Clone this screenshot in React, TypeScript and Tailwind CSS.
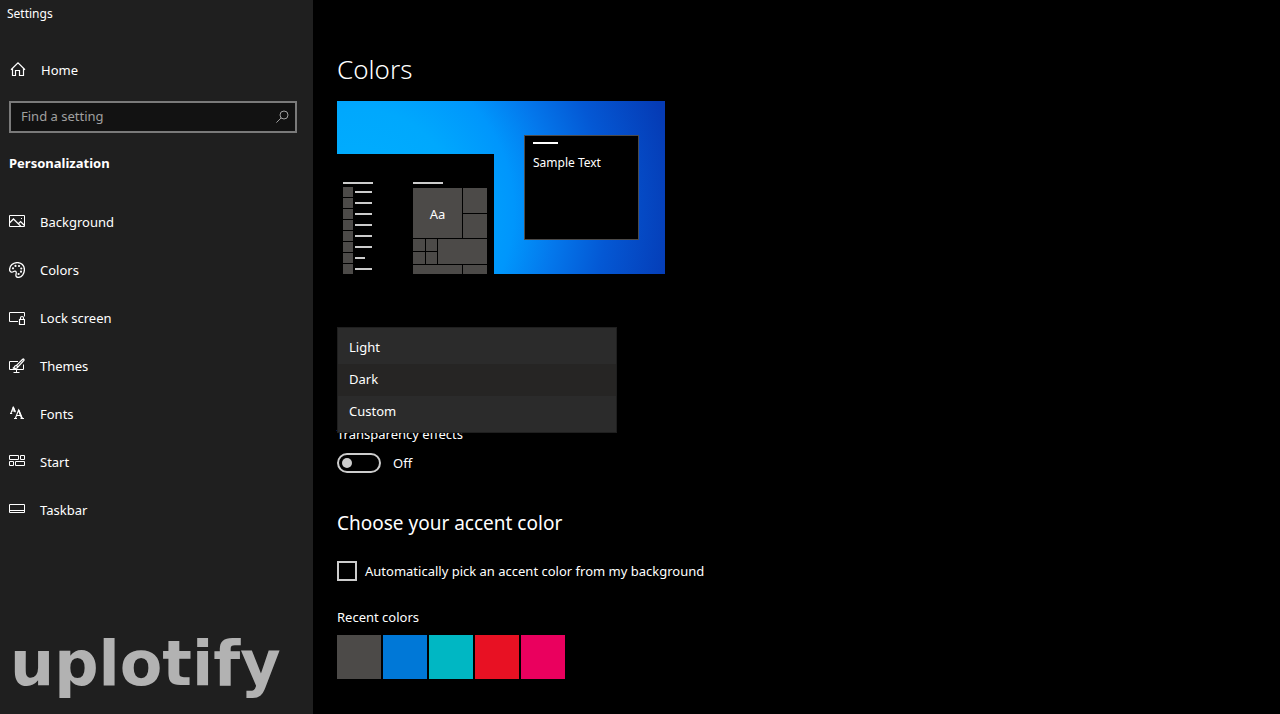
import { useState, type ReactNode } from "react";

function Icon({ children }: { children: ReactNode }) {
  return (
    <svg
      width="16"
      height="16"
      viewBox="0 0 16 16"
      fill="none"
      stroke="currentColor"
      strokeWidth="1"
      className="shrink-0"
      aria-hidden="true"
    >
      {children}
    </svg>
  );
}

const HomeIcon = () => (
  <Icon>
    <path d="M1 7.700 8 .9l7 6.800M2.500 6.500v7h3v-5h4v5h4v-7" strokeWidth="1.200" />
  </Icon>
);

const PictureIcon = () => (
  <Icon>
    <path d="M.5 1.500h15v11H.5z" />
    <path d="M.7 8.800 4.500 5l7.400 7.400M9.400 9.800l2.200-2.200 3.900 3.900" strokeWidth="1.300" />
    <path d="M12 4h1v1h-1z" fill="currentColor" stroke="none" />
  </Icon>
);

const PaletteIcon = () => (
  <Icon>
    <path
      d="M8.300.6c4.200 0 7.100 2.900 7.100 7 0 4.400-2.600 7.800-6.100 7.800-1.800 0-2.500-.9-2.400-2.300.1-1.200.6-1.800.3-2.900-.3-1.200-1.500-1.400-2.500-.7-.8.6-1.500.9-2.500.6C1 9.700.5 8.800.6 7.500.8 3.500 4 .6 8.300.6Z"
      strokeWidth="1.300"
    />
    <g fill="currentColor" stroke="none">
      <circle cx="4" cy="6.300" r="1.100" />
      <circle cx="6.500" cy="3.900" r="1.100" />
      <circle cx="10" cy="4" r="1.100" />
      <circle cx="12.300" cy="6.500" r="1.100" />
      <circle cx="12" cy="9.700" r="1.100" />
      <circle cx="9.600" cy="12" r="1.100" />
    </g>
  </Icon>
);

const LockScreenIcon = () => (
  <Icon>
    <path d="M9 11.500H.5v-9h15v4" />
    <path d="M10.500 9.500h5v5h-5zM11.500 9.500V8a1.500 1.500 0 0 1 3 0v1.500" strokeWidth="1.200" />
  </Icon>
);

const ThemesIcon = () => (
  <Icon>
    <path d="M9 3.500H.5v8h14V6.500M7.500 11.500v3M4.500 14.500h6" />
    <path
      d="M13.700 1.200 7.500 7.400l1.500 1.500L14.900 2.400C15.300 1.400 14.500.7 13.700 1.200ZM7.500 7.400c-1.300.1-2 .8-2.200 1.700-.1.500-.6.8-1.500.8 2.200.9 4.800.5 5.200-1"
      strokeWidth="1.300"
    />
  </Icon>
);

const FontsIcon = () => (
  <Icon>
    <path
      d="M1 7.500h2.200M1.900 7.300 4.200 1.200l2.200 5M2.700 5h3M5 12.500h3M11.500 12.500H15M6.400 12.300 9.600 4l3.500 8.300M7.500 9.500h4.400"
      strokeWidth="1.100"
    />
    <path d="m4.200 1.200 1.700 4.300M9.600 4l3.300 8.300" strokeWidth="1.700" />
  </Icon>
);

const StartIcon = () => (
  <Icon>
    <path d="M.5 1.500h9v4h-9zM11.500 1.500h4v4h-4zM.5 7.500h4v4h-4zM6.500 7.500h9v4h-9z" />
  </Icon>
);

const TaskbarIcon = () => (
  <Icon>
    <path d="M.5 2.500h15v8H.5zM.5 8.500h15" />
  </Icon>
);

const SearchIcon = () => (
  <Icon>
    <circle cx="10" cy="6" r="4" />
    <path d="M7.200 8.900 2.400 13.600" />
  </Icon>
);

const navItems = [
  { label: "Background", icon: <PictureIcon /> },
  { label: "Colors", icon: <PaletteIcon /> },
  { label: "Lock screen", icon: <LockScreenIcon /> },
  { label: "Themes", icon: <ThemesIcon /> },
  { label: "Fonts", icon: <FontsIcon /> },
  { label: "Start", icon: <StartIcon /> },
  { label: "Taskbar", icon: <TaskbarIcon /> },
];

const modes = ["Light", "Dark", "Custom"];

const recentColors = [
  { name: "Gray", className: "bg-[#4c4a48]" },
  { name: "Blue", className: "bg-[#0078d7]" },
  { name: "Teal", className: "bg-[#00b7c3]" },
  { name: "Red", className: "bg-[#e81123]" },
  { name: "Magenta", className: "bg-[#ea005e]" },
];

const appLines = [
  "w-[17px]",
  "w-[17px]",
  "w-[17px]",
  "w-[17px]",
  "w-[17px]",
  "w-[17px]",
  "w-[10px]",
  "w-[17px]",
];

function Sidebar() {
  return (
    <aside className="flex w-[313px] shrink-0 flex-col bg-[#1f1f1f]">
      <div className="px-[7px] pt-1 text-[12px] leading-5">Settings</div>
      <a href="#home" className="mt-[34px] flex h-6 items-center gap-[15px] px-[10px]">
        <HomeIcon />
        Home
      </a>
      <label className="mt-[19px] mr-4 ml-[9px] flex h-8 items-center border-2 border-[#7a7a7a] bg-[#121212] pr-[5px] pl-[10px] text-[#a0a0a0]">
        <input
          type="text"
          aria-label="Find a setting"
          placeholder="Find a setting"
          className="min-w-0 flex-1 bg-transparent pb-[2px] outline-none placeholder:text-[#a0a0a0]"
        />
        <SearchIcon />
      </label>
      <h2 className="mt-5 px-[9px] leading-5 font-bold">Personalization</h2>
      <nav className="mt-[25px] flex flex-col">
        {navItems.map((item) => (
          <a
            key={item.label}
            href={`#${item.label}`}
            className="flex h-12 items-center gap-[15px] px-[9px]"
          >
            {item.icon}
            {item.label}
          </a>
        ))}
      </nav>
      <div className="mt-auto px-[10px] pb-2 font-['DejaVu_Sans',sans-serif] text-[62px] leading-[84px] font-bold text-[#b2b2b2]">
        uplotify
      </div>
    </aside>
  );
}

function Preview() {
  return (
    <div className="flex h-[173px] w-[328px] items-start justify-between bg-[radial-gradient(ellipse_320px_320px_at_20px_110px,#00b0ff_0%,#00a8fd_32%,#0096fc_49%,#0478ec_62%,#0458d4_78%,#053bb5_100%)]">
      <div className="flex h-[120px] w-[157px] gap-10 self-end overflow-hidden bg-black pt-7 pl-[6px]">
        <div>
          <div className="h-[2px] w-[30px] bg-[#cccccc]" />
          <div className="mt-[3px] flex flex-col gap-px">
            {appLines.map((width, i) => (
              <div key={i} className="flex items-center gap-[2px]">
                <div className="size-[10px] bg-[#4c4a48]" />
                <div className={`h-[2px] bg-[#cccccc] ${width}`} />
              </div>
            ))}
          </div>
        </div>
        <div>
          <div className="h-[2px] w-[30px] bg-[#cccccc]" />
          <div className="mt-1 grid grid-cols-[49px_24px] grid-rows-[50px_25px_9px] gap-px">
            <div className="flex items-center justify-center bg-[#4c4a48] pt-[2px] text-[13px]">Aa</div>
            <div className="grid grid-rows-2 gap-px">
              <div className="bg-[#4c4a48]" />
              <div className="bg-[#4c4a48]" />
            </div>
            <div className="col-span-2 grid grid-cols-[12px_11px_49px] gap-px">
              <div className="grid grid-rows-2 gap-px">
                <div className="bg-[#4c4a48]" />
                <div className="bg-[#4c4a48]" />
              </div>
              <div className="grid grid-rows-2 gap-px">
                <div className="bg-[#4c4a48]" />
                <div className="bg-[#4c4a48]" />
              </div>
              <div className="bg-[#4c4a48]" />
            </div>
            <div className="bg-[#4c4a48]" />
            <div className="bg-[#4c4a48]" />
          </div>
        </div>
      </div>
      <div className="mt-[34px] mr-[26px] h-[105px] w-[115px] border border-[#4c4a48] bg-black px-2 pt-[6px]">
        <div className="h-[2px] w-[25px] bg-white" />
        <div className="mt-[9px] text-[12px] leading-5 whitespace-nowrap">Sample Text</div>
      </div>
    </div>
  );
}

export default function App() {
  const [mode, setMode] = useState("Dark");
  const [transparency, setTransparency] = useState(false);

  return (
    <div className="flex min-h-screen bg-black font-['Noto_Sans',sans-serif] text-[13px] leading-5 text-white">
      <Sidebar />
      <main className="flex min-w-0 flex-1 flex-col items-start px-6 pt-[49px]">
        <h1 className="text-[26px] leading-10 font-light">Colors</h1>
        <div className="mt-3">
          <Preview />
        </div>

        <div className="relative mt-[53px] h-[97px] w-[280px]">
          <div
            role="listbox"
            aria-label="Choose your color"
            className="absolute inset-x-0 top-0 flex flex-col border border-[#1f1f1f] bg-[#2b2b2b] py-1"
          >
            {modes.map((name) => (
              <button
                key={name}
                type="button"
                role="option"
                aria-selected={mode === name}
                onClick={() => setMode(name)}
                className={`h-8 px-[11px] pb-[2px] text-left ${mode === name ? "bg-[#262524]" : ""}`}
              >
                {name}
              </button>
            ))}
          </div>
        </div>

        <div id="transparency-label">Transparency effects</div>
        <div className="mt-[9px] flex items-center gap-3">
          <button
            type="button"
            role="switch"
            aria-checked={transparency}
            aria-labelledby="transparency-label"
            onClick={() => setTransparency(!transparency)}
            className={`flex h-5 w-11 items-center rounded-full border-2 border-[#cccccc] px-[3px] ${transparency ? "justify-end" : "justify-start"}`}
          >
            <span className="size-[10px] rounded-full bg-[#cccccc]" />
          </button>
          <span>{transparency ? "On" : "Off"}</span>
        </div>

        <h2 className="mt-9 text-[19px] leading-7">Choose your accent color</h2>
        <label className="mt-6 flex items-center gap-2">
          <input
            type="checkbox"
            className="size-5 shrink-0 appearance-none border-2 border-[#cccccc] checked:bg-[#4c4a48]"
          />
          Automatically pick an accent color from my background
        </label>
        <h3 className="mt-[26px]">Recent colors</h3>
        <div className="mt-2 flex gap-[2px]">
          {recentColors.map((color) => (
            <button
              key={color.name}
              type="button"
              aria-label={color.name}
              className={`size-11 ${color.className}`}
            />
          ))}
        </div>
      </main>
    </div>
  );
}
